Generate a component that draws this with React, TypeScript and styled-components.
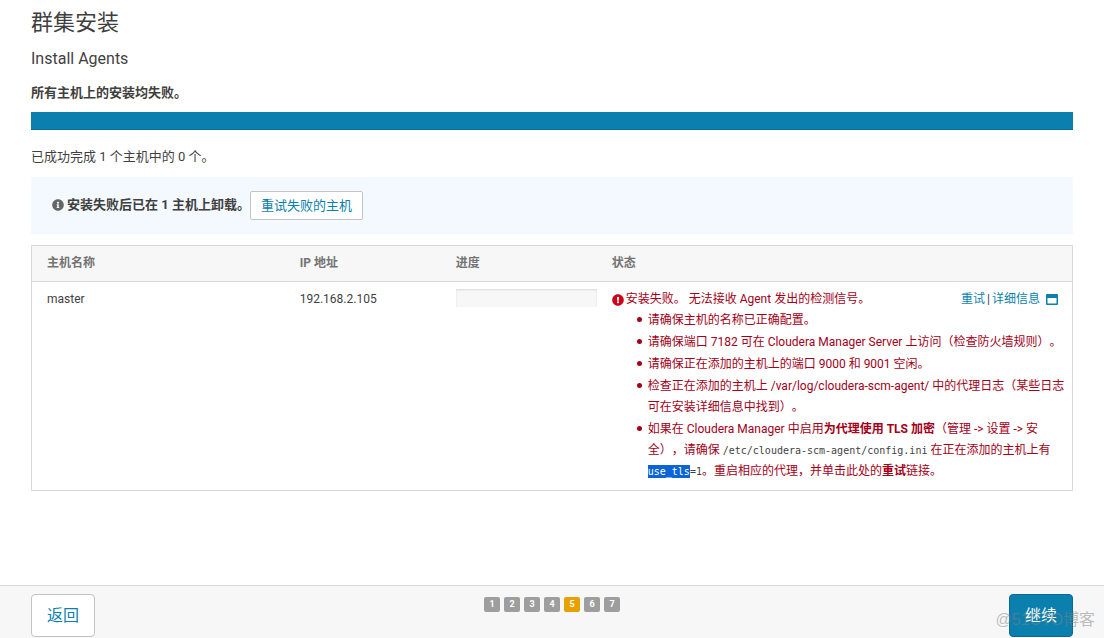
import React from "react";
import styled, { createGlobalStyle, css } from "styled-components";
import { FaInfoCircle, FaExclamationCircle } from "react-icons/fa";

const GlobalStyle = createGlobalStyle`
  *, *::before, *::after { box-sizing: border-box; }
  body {
    margin: 0;
    background: #fff;
    color: #3f3f3f;
    font-family: Roboto, "Noto Sans CJK SC", sans-serif;
    font-size: 12px;
    line-height: 20px;
    text-spacing-trim: space-all;
  }
  button { font-family: inherit; cursor: pointer; }
`;

const Page = styled.div`
  display: flex;
  flex-direction: column;
  min-height: 100vh;
`;

const Content = styled.main`
  flex: 1;
  padding: 7px 31px 24px;
`;

const Title = styled.h1`
  margin: 0;
  font-size: 22px;
  line-height: 32px;
  font-weight: 400;
`;

const Subtitle = styled.h2`
  margin: 8px 0 0;
  font-size: 16px;
  line-height: 24px;
  font-weight: 400;
`;

const Message = styled.p<{ $strong?: boolean }>`
  margin: ${(p) => (p.$strong ? "12px 0 9px" : "17px 0 10px")};
  font-size: 13px;
  font-weight: ${(p) => (p.$strong ? 700 : 400)};
`;

const TotalProgress = styled.div`
  height: 18px;
  background: #0b7fad;
  border-bottom: 1px solid #096b93;
`;

const Notice = styled.section`
  display: flex;
  align-items: center;
  height: 57px;
  padding: 0 21px;
  background: #f3f9fe;
`;

const NoticeText = styled.span`
  display: flex;
  align-items: center;
  gap: 3px;
  padding-bottom: 2px;
  font-size: 13px;
  font-weight: 700;

  svg { color: #666; }
`;

const Button = styled.button<{ $primary?: boolean; $large?: boolean }>`
  height: 29px;
  padding: 0 10px 2px;
  border: 1px solid #c3c3c3;
  border-radius: 2px;
  background: #fff;
  color: #0b7fad;
  font-size: 13px;
  ${(p) =>
    p.$large &&
    css`
      height: 43px;
      padding: 0 15px 4px;
      border-radius: 4px;
      font-size: 16px;
    `}
  ${(p) =>
    p.$primary &&
    css`
      border-color: #096b93;
      background: #0b7fad;
      color: #fff;
    `}
`;

const HostTable = styled.table`
  width: 100%;
  margin-top: 11px;
  border: 1px solid #d8d8d8;
  border-collapse: separate;
  border-spacing: 0;
  table-layout: fixed;
`;

const HeadCell = styled.th<{ $width?: string }>`
  width: ${(p) => p.$width || "auto"};
  height: 36px;
  padding: 0 0 2px 15px;
  border-bottom: 1px solid #d8d8d8;
  background: #f7f7f7;
  color: #737373;
  font-size: 12px;
  text-align: left;
`;

const Cell = styled.td`
  padding: 7px 0 8px 15px;
  line-height: 21px;
  vertical-align: top;

  &:last-child { padding-right: 14px; }
`;

const HostProgress = styled.div`
  height: 18px;
  background: #f7f7f7;
  box-shadow: inset 0 1px 2px rgba(0, 0, 0, 0.12);
`;

const StatusLine = styled.div`
  display: flex;
  justify-content: space-between;
`;

const ErrorText = styled.span`
  display: flex;
  align-items: center;
  gap: 2px;
  color: #a30019;

  svg { color: #d0021b; }
`;

const Actions = styled.span`
  display: flex;
  align-items: center;
  gap: 2px;

  svg { margin-left: 4px; }
`;

const Link = styled.a`
  color: #0b7fad;
  text-decoration: none;
`;

const Hints = styled.ul`
  margin: 0 -10px 0 0;
  padding-left: 36px;
  color: #a30019;
  list-style: none;

  li + li { margin-top: 1px; }

  li::before {
    content: "";
    display: inline-block;
    width: 5px;
    height: 5px;
    margin: 0 6px 0 -11px;
    border-radius: 50%;
    background: #a30019;
    vertical-align: 2px;
  }
`;

const Code = styled.code`
  color: #3f3f3f;
  font-family: "DejaVu Sans Mono", monospace;
  font-size: 10px;
  line-height: 1;
`;

const Selected = styled.mark`
  padding: 1px 0;
  background: #0a64d8;
  color: #fff;
`;

const Footer = styled.footer`
  display: grid;
  grid-template-columns: 1fr auto 1fr;
  align-items: start;
  padding: 8px 31px 1px;
  border-top: 1px solid #d8d8d8;
  background: #f7f7f7;
`;

const Steps = styled.ol`
  display: flex;
  gap: 4px;
  margin: 3px 0 0;
  padding: 0;
  list-style: none;
`;

const Step = styled.li<{ $active?: boolean }>`
  width: 16px;
  height: 15px;
  border-radius: 2px;
  background: ${(p) => (p.$active ? "#e8a000" : "#9e9e9e")};
  color: #fff;
  font-size: 9px;
  font-weight: 700;
  line-height: 15px;
  text-align: center;
`;

const NextArea = styled.div`
  position: relative;
  justify-self: end;
`;

const Watermark = styled.span`
  position: absolute;
  right: -22px;
  bottom: 7px;
  color: rgba(130, 130, 130, 0.5);
  font-family: "Liberation Sans", "Noto Sans CJK SC", sans-serif;
  font-size: 16px;
  white-space: nowrap;
  pointer-events: none;
`;

const WindowIcon = () => (
  <svg width="12" height="11" viewBox="0 0 12 11" aria-hidden="true">
    <path fill="#0b7fad" fillRule="evenodd" d="M1 0h10a1 1 0 0 1 1 1v9a1 1 0 0 1-1 1H1a1 1 0 0 1-1-1V1a1 1 0 0 1 1-1zM1.500 4v5.500h9V4z" />
  </svg>
);

const steps = [1, 2, 3, 4, 5, 6, 7];

export default function App() {
  return (
    <Page lang="zh-CN">
      <GlobalStyle />
      <Content>
        <Title>群集安装</Title>
        <Subtitle>Install Agents</Subtitle>
        <Message $strong>所有主机上的安装均失败。</Message>
        <TotalProgress role="progressbar" aria-valuenow={100} />
        <Message>已成功完成 1 个主机中的 0 个。</Message>
        <Notice>
          <NoticeText>
            <FaInfoCircle size={12} />
            安装失败后已在 1 主机上卸载。
          </NoticeText>
          <Button type="button">重试失败的主机</Button>
        </Notice>
        <HostTable>
          <thead>
            <tr>
              <HeadCell $width="24.3%">主机名称</HeadCell>
              <HeadCell $width="15%">IP 地址</HeadCell>
              <HeadCell $width="15%">进度</HeadCell>
              <HeadCell>状态</HeadCell>
            </tr>
          </thead>
          <tbody>
            <tr>
              <Cell>master</Cell>
              <Cell>192.168.2.105</Cell>
              <Cell>
                <HostProgress role="progressbar" aria-valuenow={0} />
              </Cell>
              <Cell>
                <StatusLine>
                  <ErrorText>
                    <FaExclamationCircle size={12} />
                    安装失败。 无法接收 Agent 发出的检测信号。
                  </ErrorText>
                  <Actions>
                    <Link href="#retry">重试</Link>
                    <span>|</span>
                    <Link href="#details">详细信息</Link>
                    <WindowIcon />
                  </Actions>
                </StatusLine>
                <Hints>
                  <li>请确保主机的名称已正确配置。</li>
                  <li>请确保端口 7182 可在 Cloudera Manager Server 上访问（检查防火墙规则）。</li>
                  <li>请确保正在添加的主机上的端口 9000 和 9001 空闲。</li>
                  <li>检查正在添加的主机上 /var/log/cloudera-scm-agent/ 中的代理日志（某些日志可在安装详细信息中找到）。</li>
                  <li>
                    如果在 Cloudera Manager 中启用<b>为代理使用 TLS 加密</b>（管理 -&gt; 设置 -&gt; 安全），请确保{" "}
                    <Code>/etc/cloudera-scm-agent/config.ini</Code> 在正在添加的主机上有{" "}
                    <Code><Selected>use_tls</Selected>=1</Code>。重启相应的代理，并单击此处的<b>重试</b>链接。
                  </li>
                </Hints>
              </Cell>
            </tr>
          </tbody>
        </HostTable>
      </Content>
      <Footer>
        <div>
          <Button type="button" $large>返回</Button>
        </div>
        <Steps>
          {steps.map((n) => (
            <Step key={n} $active={n === 5}>{n}</Step>
          ))}
        </Steps>
        <NextArea>
          <Button type="button" $large $primary>继续</Button>
          <Watermark>@51CTO博客</Watermark>
        </NextArea>
      </Footer>
    </Page>
  );
}
